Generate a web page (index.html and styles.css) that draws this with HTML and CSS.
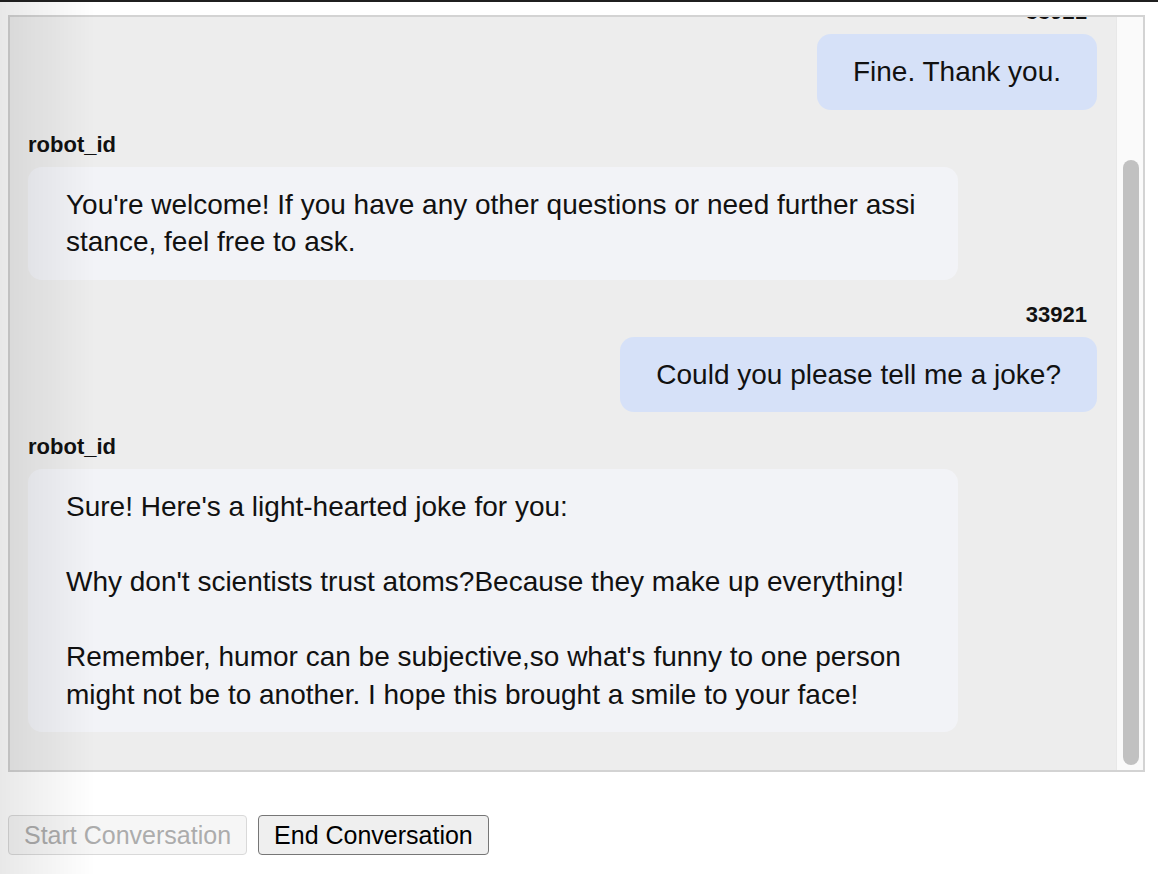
FILE: index.html
```html
<!DOCTYPE html>
<html lang="en">
<head>
    <meta charset="UTF-8">
    <meta name="viewport" content="width=device-width, initial-scale=1.0">
    <title>Chat</title>
    <link rel="stylesheet" href="styles.css">
</head>
<body>
    <div class="chat">
        <div class="chat-log" id="chatLog">
            <div class="msg bot">
                <div class="name">robot_id</div>
                <div class="bubble">Hello! I'm your virtual assistant. How are you doing today? Is there anything I can help you with?</div>
            </div>
            <div class="msg user">
                <div class="name">33921</div>
                <div class="bubble">Fine. Thank you.</div>
            </div>
            <div class="msg bot">
                <div class="name">robot_id</div>
                <div class="bubble">You're welcome! If you have any other questions or need further assistance, feel free to ask.</div>
            </div>
            <div class="msg user">
                <div class="name">33921</div>
                <div class="bubble">Could you please tell me a joke?</div>
            </div>
            <div class="msg bot">
                <div class="name">robot_id</div>
                <div class="bubble">Sure! Here's a light-hearted joke for you:

Why don't scientists trust atoms?Because they make up everything!

Remember, humor can be subjective,so what's funny to one person might not be to another. I hope this brought a smile to your face!</div>
            </div>
        </div>
        <div class="scrollbar"><div class="thumb"></div></div>
    </div>

    <div class="actions">
        <button id="startBtn" disabled>Start Conversation</button>
        <button id="endBtn">End Conversation</button>
    </div>

    <script>
        // keep the latest message in view
        const chatLog = document.getElementById('chatLog');
        chatLog.scrollTop = chatLog.scrollHeight;
    </script>
</body>
</html>
```

FILE: styles.css
```css
html { border-top: 2px solid #1f1f1f; }
body { margin: 8px; font-family: "Liberation Sans", Arial, sans-serif; color: #111; background: #fff; }
body::after { content: ""; position: fixed; left: 0; top: 2px; bottom: 0; width: 95px; pointer-events: none; background: linear-gradient(to right, rgba(0,0,0,0.09), rgba(0,0,0,0)); }

.chat { display: flex; width: 1137px; height: 757px; box-sizing: border-box; margin-top: 5px; border: 2px solid #d3d3d3; background: #ededed; }
.chat-log { flex: 1; overflow-y: scroll; scrollbar-width: none; padding: 16px 19px 38px 18px; display: flex; flex-direction: column; gap: 22px; }
.chat-log::-webkit-scrollbar { display: none; }
.scrollbar { width: 27px; box-sizing: border-box; background: #fafafa; border-left: 1px solid #e8e8e8; padding: 143px 4px 5px 6px; }
.thumb { height: 100%; background: #c1c1c1; border-radius: 8px; }

.msg { display: flex; flex-direction: column; align-items: flex-start; flex-shrink: 0; }
.msg.user { align-items: flex-end; }
.name { font-size: 22px; line-height: 26px; font-weight: bold; margin-bottom: 9px; }
.user .name { margin-right: 10px; }
.bubble { box-sizing: border-box; max-width: 930px; padding: 19px 36px; border-radius: 14px; font-size: 28px; line-height: 1.34; white-space: pre-wrap; word-break: break-all; }
.bot .bubble { background: #f2f3f7; width: 930px; padding-left: 38px; padding-right: 34px; }
.user .bubble { background: #d6e1f8; }

.actions { display: flex; gap: 11px; margin-top: 43px; }
.actions button { font-family: inherit; font-size: 25px; padding: 5px 15px 4px; color: #000; background: #efefef; border: 1px solid #767676; border-radius: 4px; }
.actions button:disabled { color: #acacac; background: #f6f6f6; border-color: #d9d9d9; }
```
